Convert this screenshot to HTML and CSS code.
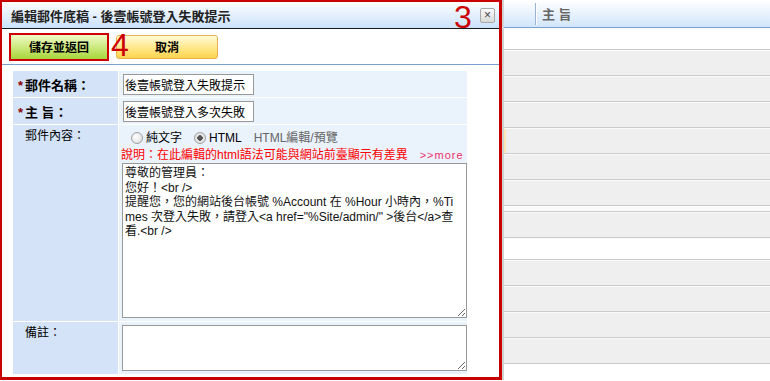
FILE: index.html
```html
<!DOCTYPE html>
<html>
  <head>
    <title>編輯郵件底稿</title>
    <link rel="stylesheet" href="styles.css">
  </head>
  <body>
    <div class="list">
      <div class="list-head">
        <span class="col-sep"></span>
        <span class="col-title">主 旨</span>
      </div>
      <div class="list-row blank"></div>
      <div class="list-row"></div>
      <div class="list-row"></div>
      <div class="list-row"></div>
      <div class="list-row hl"></div>
      <div class="list-row"></div>
      <div class="list-row"></div>
      <div class="list-row thin"></div>
      <div class="list-row"></div>
      <div class="list-row blank"></div>
      <div class="list-row"></div>
      <div class="list-row"></div>
      <div class="list-row"></div>
      <div class="list-row"></div>
    </div>

    <div class="dialog">
      <div class="dialog-title">
        <span>編輯郵件底稿 - 後壹帳號登入失敗提示</span>
        <button type="button" class="close-btn">×</button>
      </div>

      <div class="toolbar">
        <button type="button" class="btn btn-save">儲存並返回</button>
        <button type="button" class="btn btn-cancel">取消</button>
      </div>

      <div class="dialog-body">
        <table class="form-table">
          <tr class="row-short">
            <td class="label-cell strong"><span class="star">*</span>郵件名稱：</td>
            <td class="value-cell">
              <input type="text" class="field" value="後壹帳號登入失敗提示" />
            </td>
          </tr>
          <tr class="row-short">
            <td class="label-cell strong"><span class="star">*</span>主 旨：</td>
            <td class="value-cell">
              <input type="text" class="field" value="後壹帳號登入多次失敗" />
            </td>
          </tr>
          <tr class="row-content">
            <td class="label-cell top"><span class="pad">郵件內容：</span></td>
            <td class="value-cell top">
              <div class="mode-row">
                <input type="radio" name="mode" id="mode-text" class="radio" />
                <label for="mode-text">純文字</label>
                <input type="radio" name="mode" id="mode-html" class="radio gap" checked />
                <label for="mode-html">HTML</label>
                <span class="mode-link">HTML編輯/預覽</span>
              </div>
              <div class="note">說明：在此編輯的html語法可能與網站前臺顯示有差異<span class="more">&gt;&gt;more</span></div>
              <textarea class="content-box">尊敬的管理員：
您好！&lt;br /&gt;
提醒您，您的網站後台帳號 %Account 在 %Hour 小時內，%Ti
mes 次登入失敗，請登入&lt;a href="%Site/admin/" &gt;後台&lt;/a&gt;查
看.&lt;br /&gt;</textarea>
            </td>
          </tr>
          <tr class="row-memo">
            <td class="label-cell top"><span class="pad">備註：</span></td>
            <td class="value-cell top memo">
              <textarea class="memo-box"></textarea>
            </td>
          </tr>
        </table>
      </div>

      <span class="mark mark-3">3</span>
      <span class="mark mark-4">4</span>
    </div>
  </body>
</html>
```

FILE: styles.css
```css
body {
  margin: 0;
  font-family: "Liberation Sans", "Noto Sans CJK TC", sans-serif;
  font-size: 12px;
  color: #000;
  background-color: #fff;
}

/* page behind the dialog */
.list-head {
  height: 27px;
  border-bottom: 1px solid #7fa2cf;
  background: linear-gradient(#ffffff, #d1e5fb);
  display: flex;
  align-items: center;
  padding-left: 535px;
}
.col-sep {
  width: 1px;
  height: 22px;
  background-color: #9bb3d3;
  box-shadow: 1px 0 #fff;
}
.col-title {
  margin-left: 6px;
  font-size: 13px;
  font-weight: bold;
  color: #666;
}
.list-row {
  height: 25px;
  border-bottom: 1px solid #cbcbcb;
  background-color: #efefef;
  box-shadow: inset 0 1px #fafafa;
}
.list-row.blank {
  height: 21px;
  background-color: #fff;
}
.list-row.thin {
  height: 5px;
  background-color: #fafafa;
}
.list-row.hl {
  background: linear-gradient(to right, #fbe6b4 506px, #efefef 506px);
}

/* dialog */
.dialog {
  position: absolute;
  top: 0;
  left: 0;
  width: 502px;
  height: 380px;
  box-sizing: border-box;
  border: 2px solid #c80000;
  border-right-width: 3px;
  border-bottom-width: 3px;
  background-color: #fff;
  box-shadow: 2px 0 0 #d2d2d2;
}
.dialog-title {
  height: 26px;
  border-bottom: 1px solid #1a1a1a;
  background: linear-gradient(#fdfeff, #cbe1fa);
  display: flex;
  align-items: center;
  justify-content: space-between;
  padding: 0 4px 0 9px;
  font-size: 13px;
  font-weight: bold;
  color: #222;
}
.close-btn {
  width: 15px;
  height: 15px;
  padding: 0;
  border: 1px solid #a8a8a8;
  border-radius: 2px;
  background: linear-gradient(#fbfbfb, #d9d9d9);
  font: 12px/12px "Liberation Sans", sans-serif;
  color: #444;
}
.toolbar {
  height: 35px;
  border-bottom: 1px solid #7b9fcf;
  display: flex;
  align-items: center;
  gap: 7px;
  padding-left: 7px;
}
.btn {
  padding: 0;
  font-family: inherit;
  font-size: 12px;
  font-weight: bold;
  color: #000;
  cursor: pointer;
}
.btn-save {
  width: 100px;
  height: 28px;
  border: 2px solid #cc0000;
  background: linear-gradient(#f0fbc8, #cdea80 50%, #a7d53a);
}
.btn-cancel {
  width: 102px;
  height: 24px;
  border: 1px solid #e8b04a;
  border-radius: 3px;
  background: linear-gradient(#fffbd8, #ffe990 50%, #ffd44c);
}

.dialog-body {
  padding: 5px 0 0 10px;
}
.form-table {
  border-spacing: 1px;
}
.form-table td {
  padding: 0;
}
.row-short {
  height: 26px;
}
.row-content {
  height: 196px;
}
.row-memo {
  height: 52px;
}
.form-table .label-cell {
  width: 100px;
  padding-left: 5px;
  background-color: #d4e3f8;
}
.label-cell.strong {
  font-size: 13px;
  font-weight: bold;
}
.star {
  display: inline-block;
  width: 7px;
  color: #8b0000;
}
.pad {
  margin-left: 7px;
}
.form-table .top {
  vertical-align: top;
  padding-top: 4px;
  line-height: 15px;
}
.form-table .value-cell {
  width: 345px;
  padding-left: 3px;
  background-color: #eaf2fc;
}
.form-table .value-cell.top {
  padding-top: 0;
}
.form-table .value-cell.memo {
  padding-top: 3px;
}
.field {
  width: 131px;
  height: 21px;
  box-sizing: border-box;
  margin: 0 0 0 1px;
  padding: 0 1px;
  border: 1px solid #999;
  font-family: inherit;
  font-size: 12px;
  color: #000;
}

.mode-row {
  height: 20px;
  padding: 3px 0 0 9px;
  display: flex;
  align-items: center;
}
.radio {
  appearance: none;
  width: 12px;
  height: 12px;
  margin: 0 3px 0 0;
  border: 1px solid #a0a0a0;
  border-radius: 50%;
  background: radial-gradient(circle at 40% 40%, #fff, #d8d8d8);
}
.radio:checked {
  background: radial-gradient(circle, #555 0 2.5px, #eee 3px, #cfcfcf);
}
.radio.gap {
  margin-left: 12px;
}
.mode-link {
  margin-left: 12px;
  color: #666;
}
.note {
  margin-left: -1px;
  line-height: 15px;
  white-space: nowrap;
  color: #f00;
}
.more {
  margin-left: 12px;
  font-size: 11px;
  letter-spacing: 1px;
  color: #f0306a;
}
.content-box,
.memo-box {
  display: block;
  width: 345px;
  box-sizing: border-box;
  margin: 0;
  padding: 2px;
  border: 1px solid #999;
  font: 12px/14.5px "Liberation Sans", "Noto Sans CJK TC", sans-serif;
  color: #111;
}
.content-box {
  height: 155px;
}
.memo-box {
  height: 46px;
}

/* annotation marks */
.mark {
  position: absolute;
  font: 32px/32px "Liberation Sans", sans-serif;
  color: #cc0000;
}
.mark-3 {
  left: 452px;
  top: -1px;
}
.mark-4 {
  left: 109px;
  top: 27px;
}
```
